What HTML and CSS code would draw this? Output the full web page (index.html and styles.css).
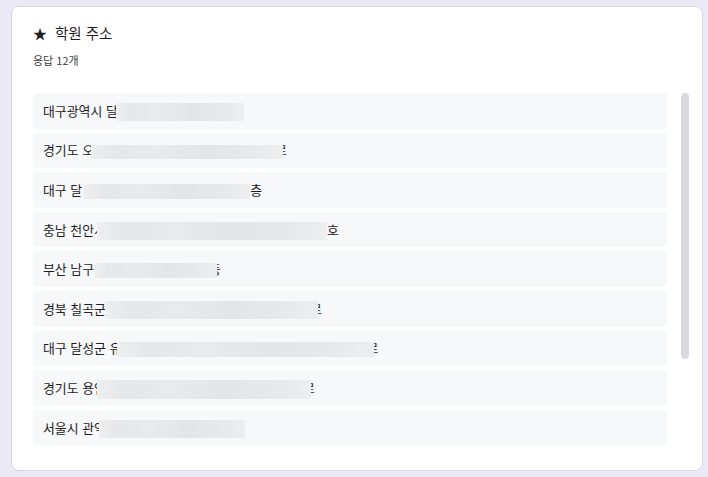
FILE: index.html
```html
<!DOCTYPE html>
<html lang="ko">
<head>
<meta charset="utf-8">
<title>학원 주소</title>
<link rel="stylesheet" href="styles.css">
</head>
<body>
<section class="card">
  <h2 class="title"><span class="star">★</span><span>학원 주소</span></h2>
  <p class="count">응답 12개</p>
  <div class="scroller">
    <ul class="list">
      <li class="item"><span>대구광역시 달</span><span class="redact r1"></span></li>
      <li class="item"><span>경기도 오</span><span class="redact r2"></span><span class="frag">로</span></li>
      <li class="item"><span>대구 달</span><span class="redact r3"></span><span>층</span></li>
      <li class="item"><span>충남 천안시</span><span class="redact r4"></span><span>호</span></li>
      <li class="item"><span>부산 남구</span><span class="redact r5"></span><span class="frag">동</span></li>
      <li class="item"><span>경북 칠곡군</span><span class="redact r6"></span><span class="frag">로</span></li>
      <li class="item"><span>대구 달성군 유</span><span class="redact r7"></span><span class="frag">로</span></li>
      <li class="item"><span>경기도 용인</span><span class="redact r8"></span><span class="frag">로</span></li>
      <li class="item"><span>서울시 관악</span><span class="redact r9"></span></li>
    </ul>
    <div class="track"><div class="thumb"></div></div>
  </div>
</section>
</body>
</html>
```
FILE: styles.css
```css
* { box-sizing: border-box; }
html, body { height: 100%; }
body {
  margin: 0;
  padding: 6px 5px 6px 11px;
  background: #ece9f6;
  font-family: "Noto Sans CJK KR", "Noto Sans", "Liberation Sans", sans-serif;
  color: #202124;
}
.card {
  height: 465px;
  background: #ffffff;
  border: 1px solid #d9d7e2;
  border-radius: 8px;
  padding: 16px 13px 24px 21px;
  display: flex;
  flex-direction: column;
}
.title {
  margin: 0;
  font-size: 14.5px;
  line-height: 20px;
  font-weight: 400;
  display: flex;
  align-items: center;
  gap: 8px;
  color: #1f1f1f;
}
.star { font-size: 14px; }
.count {
  margin: 9px 0 0;
  font-size: 11px;
  line-height: 16px;
  color: #3c3c3c;
}
.scroller {
  margin-top: 25px;
  height: 353px;
  display: flex;
  gap: 14px;
}
.list {
  flex: 1;
  list-style: none;
  margin: 0;
  padding: 0;
  overflow: hidden;
  display: flex;
  flex-direction: column;
  gap: 4px;
}
.track {
  width: 8px;
  flex: 0 0 8px;
}
.thumb {
  height: 266px;
  background: #d9d9de;
  border-radius: 4px;
}
.item {
  flex: 0 0 auto;
  height: 35.6px;
  padding: 0 10px;
  background: #f7f8fa;
  border-radius: 4px;
  display: flex;
  align-items: center;
  font-size: 12.9px;
  line-height: 16px;
  color: #1e1e1e;
  white-space: pre;
}
.redact {
  display: inline-block;
  position: relative;
  z-index: 1;
  background: linear-gradient(90deg, #eeeff1 0%, #e6e7e9 12%, #e9eaec 35%, #e4e5e7 60%, #e8e9eb 85%, #eceef0 100%);
  margin-top: 3px;
}
.frag { margin-left: -8px; }
.r1 { width: 128px; height: 18px; margin-left: -2px; }
.r2 { width: 192px; height: 14px; margin-left: -3px; }
.r3 { width: 167px; height: 15px; margin-left: 1px; }
.r4 { width: 230px; height: 18px; margin-left: -9px; }
.r5 { width: 123px; height: 15px; }
.r6 { width: 213px; height: 18px; margin-left: -1px; }
.r7 { width: 257px; height: 15px; margin-left: -4px; }
.r8 { width: 214px; height: 19px; margin-left: -9px; }
.r9 { width: 146px; height: 18px; margin-left: -7px; }
```
